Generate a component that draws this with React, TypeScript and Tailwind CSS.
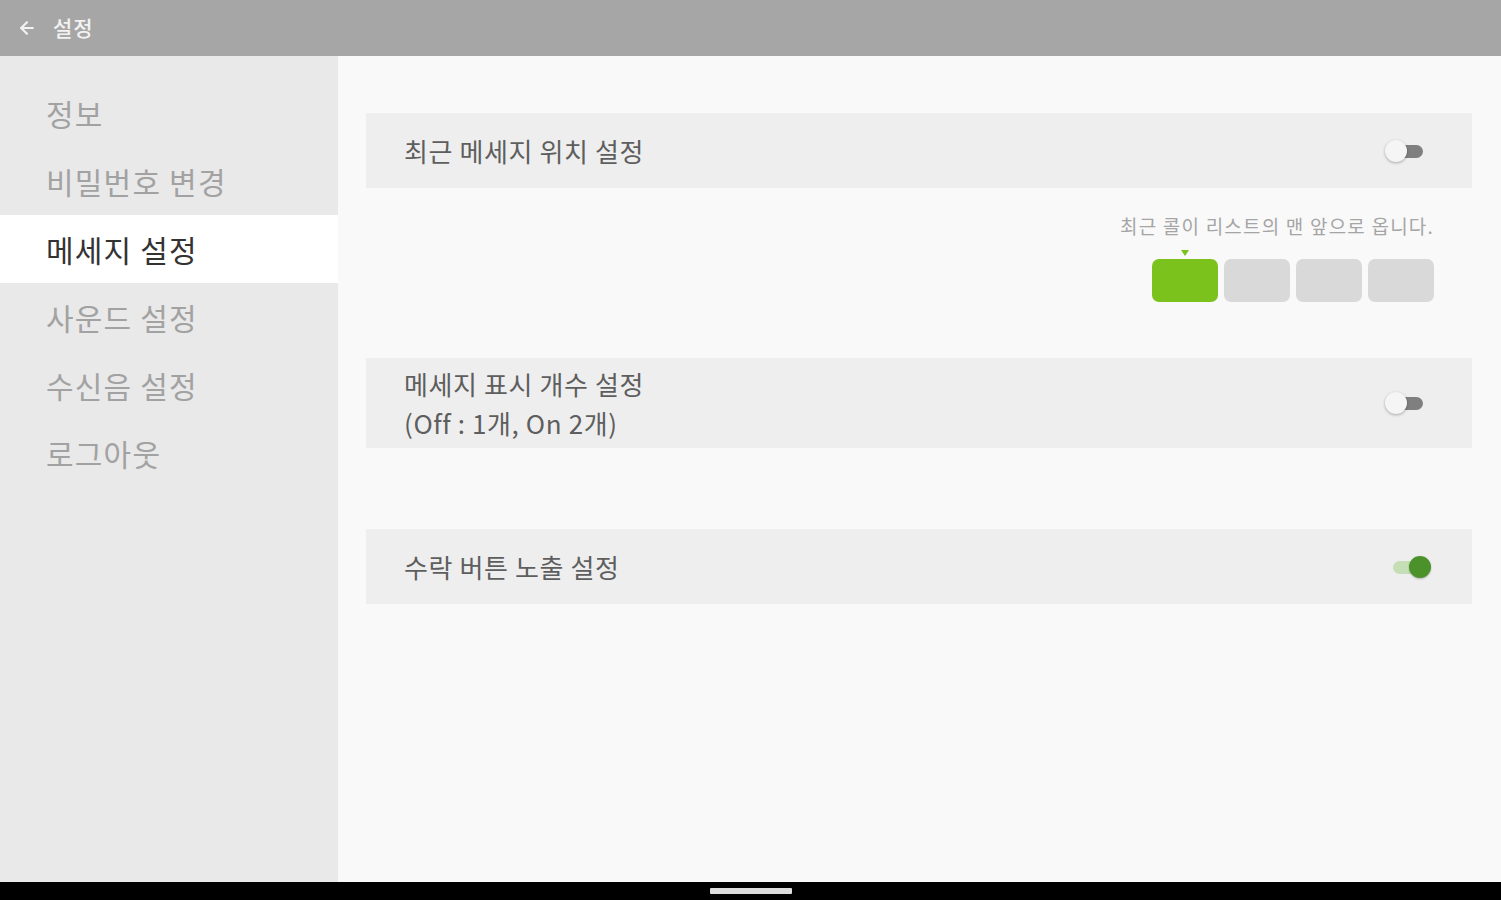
import { ArrowLeft } from "lucide-react";

const menuItems = ["정보", "비밀번호 변경", "메세지 설정", "사운드 설정", "수신음 설정", "로그아웃"];
const selectedIndex = 2;

const Toggle = ({ on }: { on: boolean }) => {
  if (on) {
    return (
      <div className="relative h-[22px] w-[46px]">
        <div className="absolute left-[8px] top-[5px] h-[13px] w-[30px] rounded-full bg-[#c5deb6]" />
        <div className="absolute right-0 top-0 h-[22px] w-[22px] rounded-full bg-[#4c922a] shadow-[0_1px_2px_rgba(0,0,0,0.25)]" />
      </div>
    );
  }
  return (
    <div className="relative h-[22px] w-[46px]">
      <div className="absolute left-[6px] top-[5px] h-[13px] w-[32px] rounded-full bg-[#7f7f7f]" />
      <div className="absolute left-0 top-0 h-[22px] w-[22px] rounded-full bg-[#f5f5f5] shadow-[0_1px_3px_rgba(0,0,0,0.3)]" />
    </div>
  );
};

const SettingCard = ({ children, on, className }: { children: React.ReactNode; on: boolean; className: string }) => (
  <div className={`flex items-center justify-between bg-[#eeeeee] pl-[38px] pr-[41px] ${className}`}>
    <div className="text-[26px] leading-[39px] tracking-[0.6px] text-[#5e5e5e]">{children}</div>
    <Toggle on={on} />
  </div>
);

export default function App() {
  return (
    <div className="flex h-[900px] w-[1501px] flex-col bg-black font-['Noto_Sans_CJK_KR','Noto_Sans',sans-serif]">
      <header className="flex h-[56px] items-center gap-[16px] bg-[#a6a6a6] pl-[17px] shadow-[0_1px_2px_rgba(0,0,0,0.15)]">
        <ArrowLeft className="h-[20px] w-[20px] text-[#f2f2f2]" strokeWidth={2.5} />
        <span className="text-[21px] font-medium tracking-[1px] text-[#f2f2f2]">설정</span>
      </header>

      <div className="flex h-[826px]">
        <nav className="flex w-[338px] flex-col bg-[#e9e9e9] pt-[23px]">
          {menuItems.map((item, i) => (
            <div
              key={item}
              className={`flex h-[68px] items-center pl-[46px] text-[30px] tracking-[1.2px] ${
                i === selectedIndex ? "bg-white text-[#333333]" : "text-[#a2a2a2]"
              }`}
            >
              {item}
            </div>
          ))}
        </nav>

        <main className="flex flex-1 flex-col bg-[#f9f9f9] pl-[28px] pr-[29px] pt-[57px]">
          <SettingCard on={false} className="h-[75px]">
            최근 메세지 위치 설정
          </SettingCard>

          <div className="flex flex-col items-end pr-[38px] pt-[25px]">
            <p className="text-[19px] leading-[26px] tracking-[1.2px] text-[#a5a5a5]">최근 콜이 리스트의 맨 앞으로 옵니다.</p>
            <div className="mt-[11px] flex gap-[6px]">
              {[0, 1, 2, 3].map((n) => (
                <div key={n} className="flex flex-col items-center">
                  <div
                    className={`mb-[3px] h-0 w-0 border-x-[4px] border-t-[6px] border-x-transparent ${
                      n === 0 ? "border-t-[#7cc21c]" : "border-t-transparent"
                    }`}
                  />
                  <div
                    className={`h-[43px] w-[66px] rounded-[7px] ${n === 0 ? "bg-[#7cc21c]" : "bg-[#d9d9d9]"}`}
                  />
                </div>
              ))}
            </div>
          </div>

          <SettingCard on={false} className="mt-[56px] h-[90px]">
            <div>메세지 표시 개수 설정</div>
            <div>(Off : 1개, On 2개)</div>
          </SettingCard>

          <SettingCard on={true} className="mt-[81px] h-[75px]">
            수락 버튼 노출 설정
          </SettingCard>
        </main>
      </div>

      <div className="flex flex-1 items-center justify-center bg-black">
        <div className="h-[6px] w-[82px] rounded-[1px] bg-[#dddddd]" />
      </div>
    </div>
  );
}
